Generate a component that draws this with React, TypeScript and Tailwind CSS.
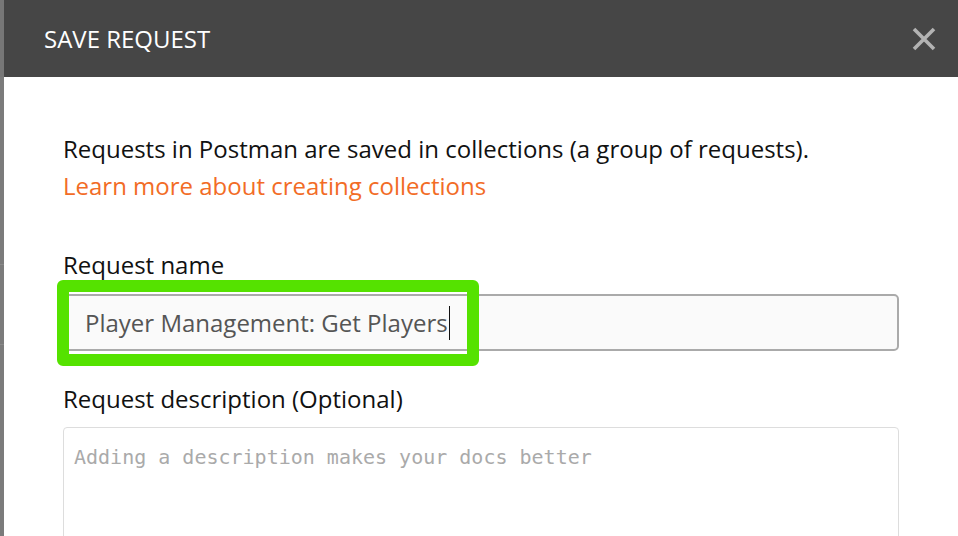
import React from 'react';

const CloseIcon: React.FC = () => (
  <svg width="24" height="24" viewBox="0 0 24 24" className="text-[#b3b3b3]">
    <path d="M2 2 L22 22 M22 2 L2 22" stroke="currentColor" strokeWidth="3.6" strokeLinecap="butt" />
  </svg>
);

const App: React.FC = () => {
  return (
    <div className="flex h-[536px] w-[958px] overflow-hidden bg-white font-['Open_Sans',sans-serif]">
      {/* page behind the overlay */}
      <div className="w-[4px] shrink-0 bg-[#7b7b7b] flex flex-col">
        <div className="h-[77px] shrink-0 bg-[#777]"></div>
        <div className="mt-[187px] h-px bg-[#8a8a8a]"></div>
        <div className="mt-[79px] h-px bg-[#8a8a8a]"></div>
      </div>

      <div className="flex-1 flex flex-col">
        <div className="h-[77px] shrink-0 bg-[#464646] flex items-center justify-between pl-[40px] pr-[22px]">
          <h2 className="text-[24px] font-medium text-white">SAVE REQUEST</h2>
          <CloseIcon />
        </div>

        <div className="flex-1 pl-[59px] pr-[59px] pt-[53px]">
          <p className="text-[24px] leading-[37px] text-[#111]">
            Requests in Postman are saved in collections (a group of requests).
          </p>
          <a className="block text-[24px] leading-[37px] text-[#f26c26]">
            Learn more about creating collections
          </a>

          <label className="block mt-[42px] text-[24px] leading-[37px] text-[#111]">Request name</label>
          <div className="relative mt-[11px]">
            <div className="h-[57px] rounded-[5px] border-2 border-[#aaaaaa] bg-[#fafafa] flex items-center pl-[20px] text-[24px] text-[#555]">
              <span>Player Management: Get Players</span>
              <span className="ml-px w-px h-[34px] bg-[#111]"></span>
            </div>
            <div className="absolute -left-[6px] -top-[14px] w-[422px] h-[86px] rounded-[6px] border-[12px] border-[#55e200]"></div>
          </div>

          <label className="block mt-[29px] text-[24px] leading-[37px] text-[#111]">
            Request description (Optional)
          </label>
          <div className="mt-[10px] h-[200px] rounded-t-[4px] border border-[#dddddd] bg-white pl-[10px] pt-[17px] font-['DejaVu_Sans_Mono',monospace] text-[20px] leading-[24px] text-[#aaaaaa]">
            Adding a description makes your docs better
          </div>
        </div>
      </div>
    </div>
  );
};

export default App;
